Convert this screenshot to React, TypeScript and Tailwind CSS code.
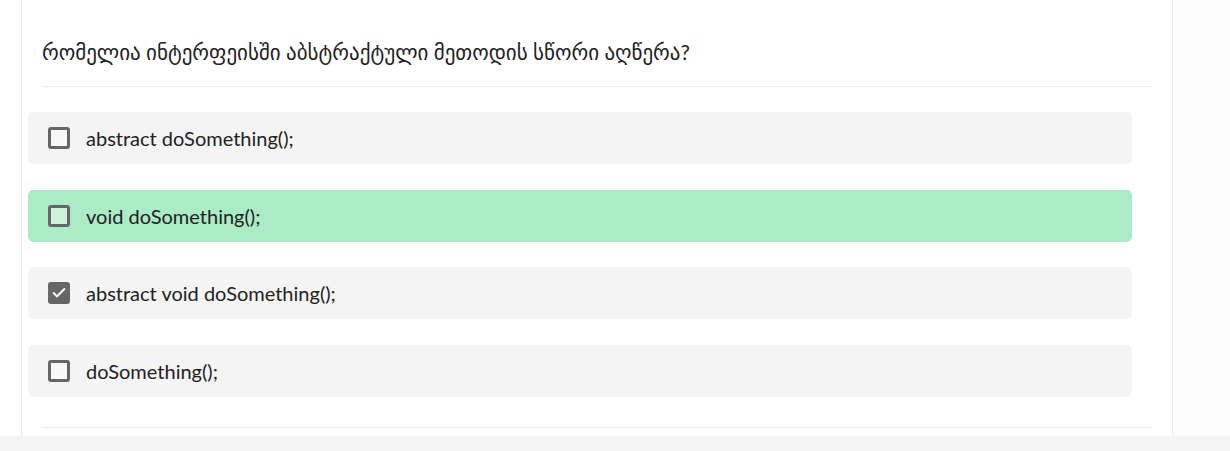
import { Check } from 'lucide-react';

const options = [
  { text: 'abstract doSomething();', checked: false, correct: false },
  { text: 'void doSomething();', checked: false, correct: true },
  { text: 'abstract void doSomething();', checked: true, correct: false },
  { text: 'doSomething();', checked: false, correct: false },
];

const App = () => {
  return (
    <div className="w-[1230px] h-[451px] flex flex-col bg-white font-['Lato','DejaVu_Sans',sans-serif] text-[#222]">
      <div className="flex flex-1 min-h-0">
        <div className="w-[21px] bg-white" />
        <div className="w-[1152px] border-x border-[#ececec] bg-white pl-[20px] pr-[19px]">
          <div className="pt-[38px] pb-[20px] border-b border-[#ececec] text-[21px] leading-[28px]">
            რომელია ინტერფეისში აბსტრაქტული მეთოდის სწორი აღწერა?
          </div>

          <div className="flex flex-col gap-[25.6px] mt-[25px] -ml-[14px] w-[1104px]">
            {options.map((opt) => (
              <label
                key={opt.text}
                className={`h-[52px] flex items-center gap-[16px] pl-[20px] rounded-[5px] ${
                  opt.correct ? 'bg-[#abebc6]' : 'bg-[#f4f4f4]'
                }`}
              >
                {opt.checked ? (
                  <span className="w-[22px] h-[22px] rounded-[3px] bg-[#666] flex items-center justify-center">
                    <Check className="text-white w-[16px] h-[16px]" strokeWidth={3} />
                  </span>
                ) : (
                  <span className="w-[22px] h-[22px] rounded-[3px] border-[3px] border-[#666] bg-white/40" />
                )}
                <span className="text-[20px] leading-none">{opt.text}</span>
              </label>
            ))}
          </div>

          <div className="mt-[30px] border-b border-[#ececec]" />
        </div>
        <div className="flex-1 bg-[#fdfdfd]" />
      </div>
      <div className="h-[15px] bg-[#f5f5f5]" />
    </div>
  );
};

export default App;
